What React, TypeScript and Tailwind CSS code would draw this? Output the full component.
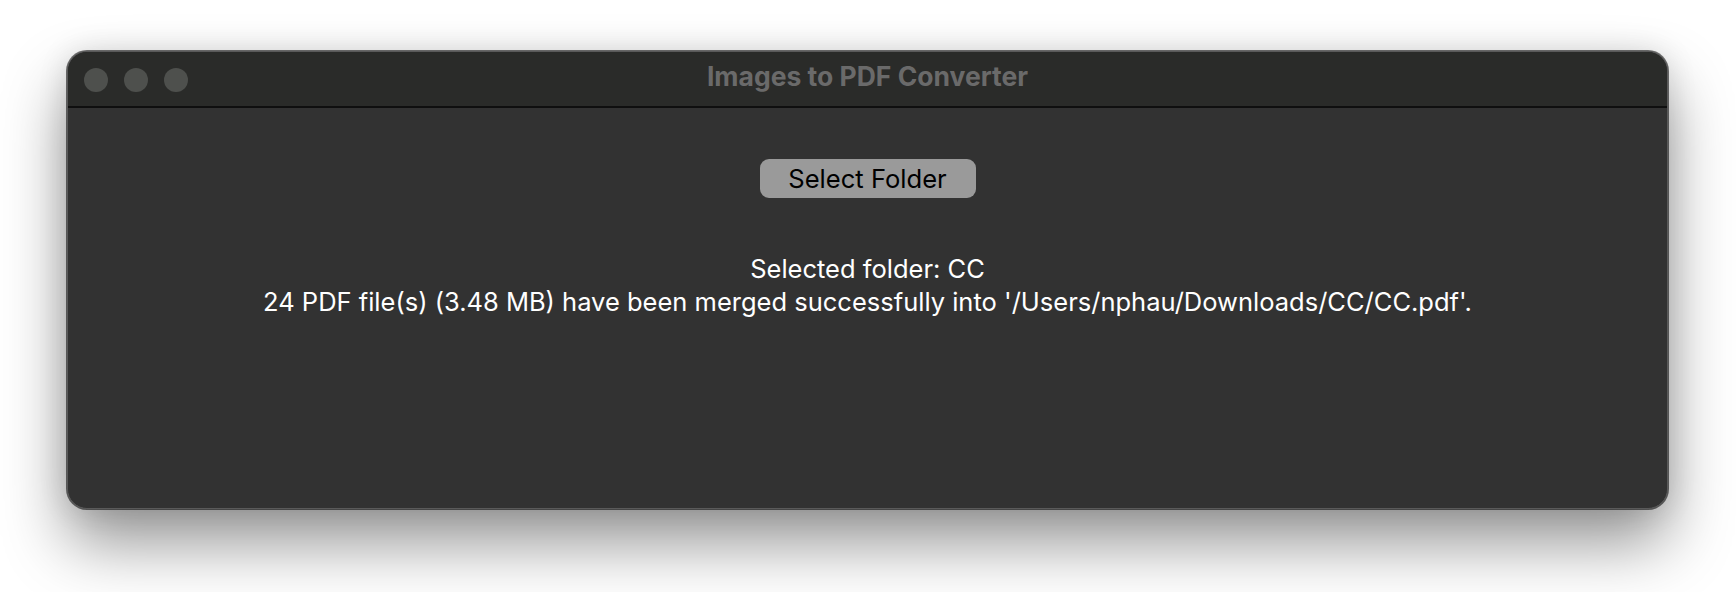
import React from "react";

export default function App() {
  return (
    <div className="w-[1736px] h-[592px] bg-white pl-[67px] pt-[51px] overflow-hidden" style={{ fontFamily: "Inter, 'Noto Sans', sans-serif" }}>
      <div className="w-[1601px] h-[458px] rounded-[20px] overflow-hidden border border-[#5a5a5a] bg-[#323232] flex flex-col shadow-[0_0_0_1px_rgba(0,0,0,0.55),0_34px_64px_rgba(0,0,0,0.42),0_0_30px_rgba(0,0,0,0.12)]">
        <div className="relative h-[56px] shrink-0 bg-[#2a2b29] border-b-2 border-[#0f0f0f] flex items-center justify-center">
          <div className="absolute left-[16px] top-[16px] flex gap-[16px]">
            <span className="w-[24px] h-[24px] rounded-full bg-[#4e504d]" />
            <span className="w-[24px] h-[24px] rounded-full bg-[#4e504d]" />
            <span className="w-[24px] h-[24px] rounded-full bg-[#4e504d]" />
          </div>
          <div className="text-[26.5px] font-bold text-[#6a6a6a] leading-none -mt-[5px]">Images to PDF Converter</div>
        </div>
        <div className="flex-1 flex flex-col items-center pt-[51px]">
          <button className="w-[216px] h-[39px] rounded-[9px] bg-[#9a9a9a] text-black text-[25.6px] leading-none flex items-center justify-center">
            Select Folder
          </button>
          <div className="mt-[54px] text-white text-[25.5px] leading-[33px] text-center">
            <div>Selected folder: CC</div>
            <div>24 PDF file(s) (3.48 MB) have been merged successfully into '/Users/nphau/Downloads/CC/CC.pdf'.</div>
          </div>
        </div>
      </div>
    </div>
  );
}
